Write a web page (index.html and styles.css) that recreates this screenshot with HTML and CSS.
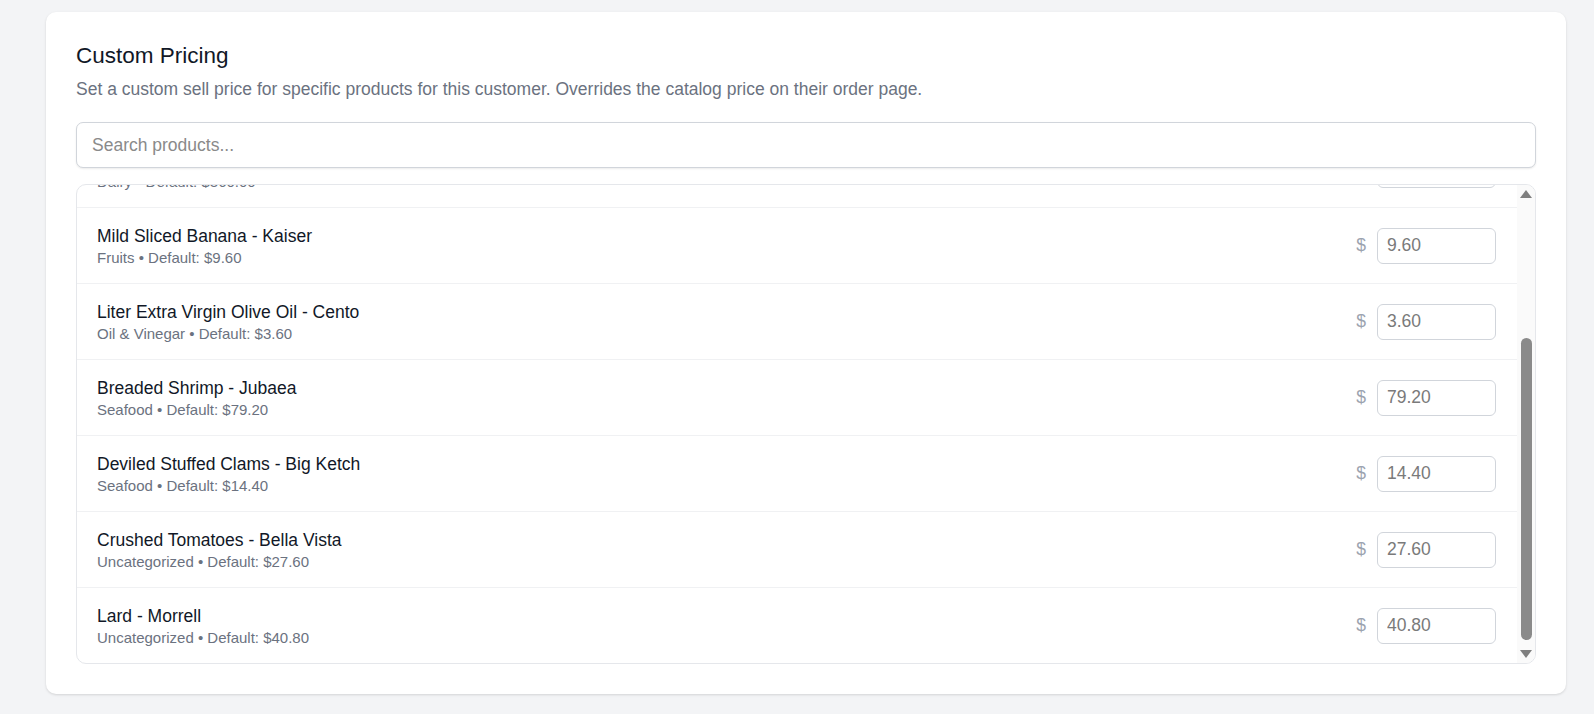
FILE: index.html
```html
<!DOCTYPE html>
<html lang="en">
<head>
<meta charset="utf-8">
<title>Custom Pricing</title>
<link rel="stylesheet" href="styles.css">
</head>
<body>
<section class="card">
  <h2 class="title">Custom Pricing</h2>
  <p class="subtitle">Set a custom sell price for specific products for this customer. Overrides the catalog price on their order page.</p>
  <input class="search" type="text" placeholder="Search products...">
  <div class="list">
    <div class="viewport">
      <div class="rows">
        <div class="row">
          <div class="info">
            <div class="name">Whole Milk Gallon - Horizon</div>
            <div class="meta">Dairy • Default: $360.00</div>
          </div>
          <div class="price"><span class="cur">$</span><input class="price-input" type="text" placeholder="360.00"></div>
        </div>
        <div class="row">
          <div class="info">
            <div class="name">Mild Sliced Banana - Kaiser</div>
            <div class="meta">Fruits • Default: $9.60</div>
          </div>
          <div class="price"><span class="cur">$</span><input class="price-input" type="text" placeholder="9.60"></div>
        </div>
        <div class="row">
          <div class="info">
            <div class="name">Liter Extra Virgin Olive Oil - Cento</div>
            <div class="meta">Oil &amp; Vinegar • Default: $3.60</div>
          </div>
          <div class="price"><span class="cur">$</span><input class="price-input" type="text" placeholder="3.60"></div>
        </div>
        <div class="row">
          <div class="info">
            <div class="name">Breaded Shrimp - Jubaea</div>
            <div class="meta">Seafood • Default: $79.20</div>
          </div>
          <div class="price"><span class="cur">$</span><input class="price-input" type="text" placeholder="79.20"></div>
        </div>
        <div class="row">
          <div class="info">
            <div class="name">Deviled Stuffed Clams - Big Ketch</div>
            <div class="meta">Seafood • Default: $14.40</div>
          </div>
          <div class="price"><span class="cur">$</span><input class="price-input" type="text" placeholder="14.40"></div>
        </div>
        <div class="row">
          <div class="info">
            <div class="name">Crushed Tomatoes - Bella Vista</div>
            <div class="meta">Uncategorized • Default: $27.60</div>
          </div>
          <div class="price"><span class="cur">$</span><input class="price-input" type="text" placeholder="27.60"></div>
        </div>
        <div class="row">
          <div class="info">
            <div class="name">Lard - Morrell</div>
            <div class="meta">Uncategorized • Default: $40.80</div>
          </div>
          <div class="price"><span class="cur">$</span><input class="price-input" type="text" placeholder="40.80"></div>
        </div>
      </div>
    </div>
    <div class="scrollbar">
      <div class="sb-btn">
        <svg width="12" height="8" viewBox="0 0 12 8"><polygon points="0,8 6,0 12,8" fill="#7f7f7f"/></svg>
      </div>
      <div class="sb-track"><div class="sb-thumb"></div></div>
      <div class="sb-btn">
        <svg width="12" height="8" viewBox="0 0 12 8"><polygon points="0,0 12,0 6,8" fill="#7f7f7f"/></svg>
      </div>
    </div>
  </div>
</section>
</body>
</html>
```

FILE: styles.css
```css
* { box-sizing: border-box; }

html, body {
  margin: 0;
  padding: 0;
  background: #f3f4f6;
  font-family: "Liberation Sans", Arial, sans-serif;
}

body {
  height: 714px;
  overflow: hidden;
  padding: 12px 28px 0 46px;
}

.card {
  background: #ffffff;
  border-radius: 10px;
  box-shadow: 0 1px 3px rgba(0, 0, 0, 0.10), 0 1px 2px rgba(0, 0, 0, 0.04);
  padding: 30px 30px 30px 30px;
}

.title {
  margin: 0 0 7px 0;
  font-size: 22.5px;
  line-height: 28px;
  font-weight: 400;
  color: #111827;
}

.subtitle {
  margin: 0;
  font-size: 17.5px;
  line-height: 25px;
  color: #6b7280;
}

.search {
  display: block;
  width: 100%;
  height: 46px;
  margin-top: 20px;
  padding: 0 15px;
  border: 1px solid #d1d5db;
  border-radius: 7px;
  box-shadow: 0 1px 2px rgba(0, 0, 0, 0.08);
  font-family: inherit;
  font-size: 17.5px;
  color: #111827;
  background: #fff;
  outline: none;
}
.search::placeholder { color: #8a8a8a; }

.list {
  display: flex;
  margin-top: 16px;
  height: 480px;
  border: 1px solid #e5e7eb;
  border-radius: 10px;
  overflow: hidden;
}

.viewport {
  flex: 1;
  display: flex;
  flex-direction: column;
  justify-content: flex-end;
  overflow: hidden;
}

.rows {
  flex: none;
  margin-bottom: -1px;
}

.row {
  display: flex;
  align-items: center;
  justify-content: space-between;
  height: 76px;
  padding: 0 21px 0 20px;
  border-bottom: 1px solid #f0f1f3;
}

.info {
  display: flex;
  flex-direction: column;
}

.name {
  font-size: 17.5px;
  line-height: 24px;
  color: #111827;
}

.meta {
  font-size: 15px;
  line-height: 20px;
  color: #6b7280;
}

.price {
  display: flex;
  align-items: center;
}

.cur {
  font-size: 17.5px;
  color: #9ca3af;
  margin-right: 11px;
}

.price-input {
  width: 119px;
  height: 36px;
  padding: 0 9px;
  border: 1px solid #d1d5db;
  border-radius: 6px;
  font-family: inherit;
  font-size: 17.5px;
  color: #111827;
  background: #fff;
  outline: none;
}
.price-input::placeholder { color: #7a7a7a; }

.scrollbar {
  flex: none;
  width: 18px;
  display: flex;
  flex-direction: column;
  background: #fafafa;
}

.sb-btn {
  height: 18px;
  display: flex;
  align-items: center;
  justify-content: center;
}

.sb-track {
  flex: 1;
  display: flex;
  flex-direction: column;
  justify-content: flex-end;
  padding-bottom: 5px;
}

.sb-thumb {
  width: 11px;
  height: 302px;
  margin: 0 auto;
  border-radius: 6px;
  background: #8a8a8a;
}
```
